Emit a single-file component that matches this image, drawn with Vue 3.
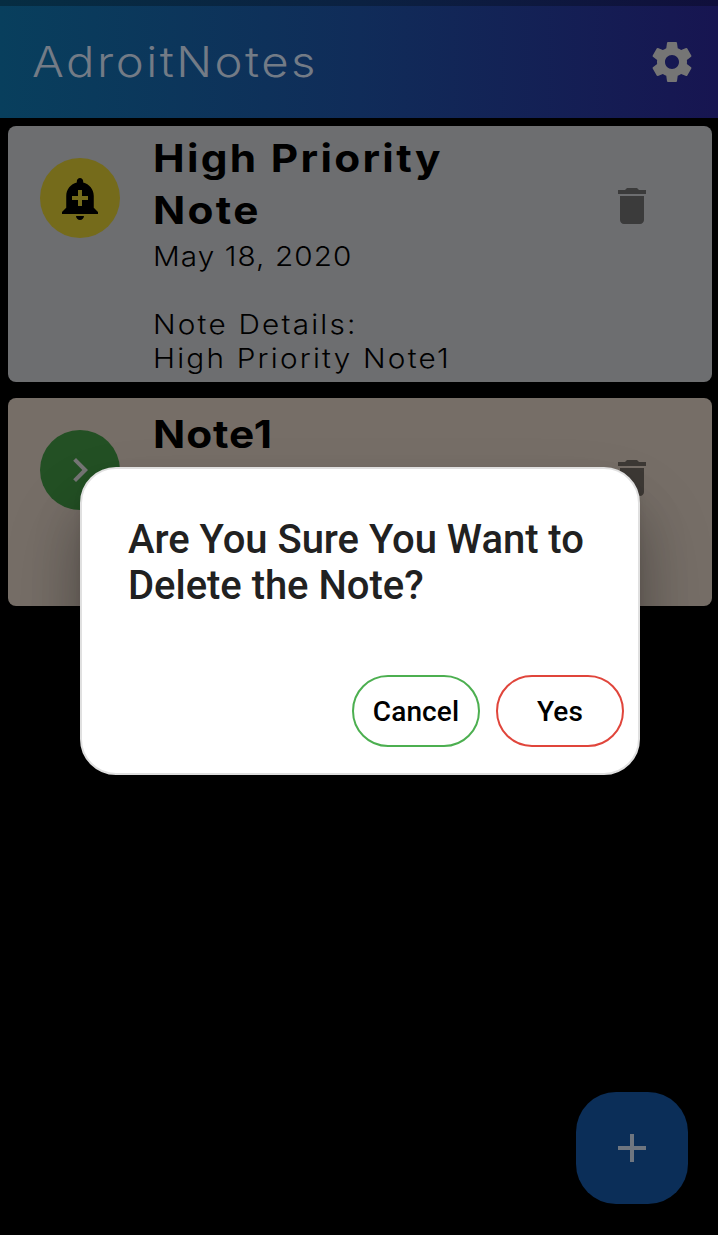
<script setup>
const notes = [
  {
    id: 1,
    title: ['High Priority', 'Note'],
    date: 'May 18, 2020',
    details: 'High Priority Note1',
    high: true,
  },
  { id: 2, title: ['Note1'], date: '', details: '', high: false },
]
</script>

<template>
  <main class="screen">
    <div class="status"></div>
    <header class="bar">
      <h1 class="brand">AdroitNotes</h1>
      <svg class="gear" viewBox="0 0 24 24">
        <path d="M19.43 12.98c.04-.32.07-.64.07-.98s-.03-.66-.07-.98l2.11-1.65c.19-.15.24-.42.12-.64l-2-3.46c-.12-.22-.39-.3-.61-.22l-2.49 1c-.52-.4-1.08-.73-1.69-.98l-.38-2.65C14.46 2.18 14.25 2 14 2h-4c-.25 0-.46.18-.49.42l-.38 2.65c-.61.25-1.17.59-1.69.98l-2.49-1c-.23-.09-.49 0-.61.22l-2 3.46c-.13.22-.07.49.12.64l2.11 1.65c-.04.32-.07.65-.07.98s.03.66.07.98l-2.11 1.65c-.19.15-.24.42-.12.64l2 3.46c.12.22.39.3.61.22l2.49-1c.52.4 1.08.73 1.69.98l.38 2.65c.03.24.24.42.49.42h4c.25 0 .46-.18.49-.42l.38-2.65c.61-.25 1.17-.59 1.69-.98l2.49 1c.23.09.49 0 .61-.22l2-3.46c.12-.22.07-.49-.12-.64l-2.11-1.65zM12 15.5c-1.93 0-3.5-1.57-3.5-3.5s1.57-3.5 3.5-3.5 3.5 1.57 3.5 3.5-1.57 3.5-3.5 3.5z" />
      </svg>
    </header>

    <section class="list">
      <article v-for="n in notes" :key="n.id" class="card" :class="n.high ? 'high' : 'low'">
        <div class="avatar">
          <svg v-if="n.high" class="glyph" viewBox="0 0 24 24">
            <path d="M10.01 21.01c0 1.1.89 1.99 1.99 1.99s1.99-.89 1.99-1.99h-3.98zm8.87-4.19V11c0-3.25-2.25-5.97-5.29-6.69v-.72C13.59 2.71 12.88 2 12 2s-1.59.71-1.59 1.59v.72C7.37 5.03 5.12 7.75 5.12 11v5.82L3 18.94V20h18v-1.06l-2.12-2.12zM16 13.01h-3v3h-2v-3H8V11h3V8h2v3h3v2.01z" />
          </svg>
          <svg v-else class="glyph" viewBox="0 0 24 24">
            <path d="M8.59 16.59 13.17 12 8.59 7.41 10 6l6 6-6 6z" />
          </svg>
        </div>
        <div class="body">
          <h2 class="title">
            <span v-for="t in n.title" :key="t" class="line">{{ t }}</span>
          </h2>
          <p v-if="n.date" class="text date">{{ n.date }}</p>
          <template v-if="n.details">
            <p class="text">Note Details:</p>
            <p class="text">{{ n.details }}</p>
          </template>
        </div>
        <svg class="trash" viewBox="0 0 24 24">
          <path d="M6 19c0 1.1.9 2 2 2h8c1.1 0 2-.9 2-2V7H6v12zM19 4h-3.5l-1-1h-5l-1 1H5v2h14V4z" />
        </svg>
      </article>
    </section>

    <button class="fab">
      <svg viewBox="0 0 24 24"><path d="M19 13h-6v6h-2v-6H5v-2h6V5h2v6h6v2z" /></svg>
    </button>

    <div class="dialog">
      <p class="question">Are You Sure You Want to<br />Delete the Note?</p>
      <div class="actions">
        <button class="btn cancel">Cancel</button>
        <button class="btn yes">Yes</button>
      </div>
    </div>
  </main>
</template>

<style>
body {
  margin: 0;
  background: #000;
}
</style>

<style scoped>
.screen {
  position: relative;
  width: 718px;
  height: 1235px;
  overflow: hidden;
  background: #000;
  font-family: Inter, 'Open Sans', sans-serif;
}
h1,
h2,
p {
  margin: 0;
}
svg {
  display: block;
}
.status {
  height: 6px;
  background: linear-gradient(90deg, #062d42, #0b2141 50%, #100f3b);
}
.bar {
  display: flex;
  align-items: center;
  justify-content: space-between;
  height: 112px;
  padding: 0 22px 0 32px;
  box-sizing: border-box;
  background: linear-gradient(90deg, #083f5d, #102c59 50%, #171551);
}
.brand {
  font-size: 42px;
  font-weight: 300;
  line-height: 56px;
  letter-spacing: 2.2px;
  color: #737b86;
  transform: scaleX(1.125);
  transform-origin: 0 0;
}
.gear {
  width: 48px;
  height: 48px;
  fill: #757575;
}
.list {
  display: flex;
  flex-direction: column;
  gap: 16px;
  padding: 8px 6px 0 8px;
}
.card {
  display: flex;
  align-items: flex-start;
  box-sizing: border-box;
  border-radius: 8px;
  padding: 6px 60px 0 32px;
}
.high {
  height: 256px;
  background: #6d6e70;
}
.low {
  height: 208px;
  background: #766e67;
}
.avatar {
  display: flex;
  align-items: center;
  justify-content: center;
  flex: none;
  width: 80px;
  height: 80px;
  margin-top: 26px;
  border-radius: 50%;
}
.high .avatar {
  background: #756b1b;
}
.low .avatar {
  background: #235024;
}
.glyph {
  width: 48px;
  height: 48px;
}
.high .glyph {
  fill: #000;
}
.low .glyph {
  fill: #757575;
}
.body {
  flex: 1;
  padding-left: 33px;
  white-space: nowrap;
}
.title {
  font-size: 38.5px;
  font-weight: 700;
  line-height: 52px;
  letter-spacing: 2.1px;
  color: #000;
}
.low .title {
  margin-top: 4px;
  letter-spacing: 0.8px;
}
.line {
  display: block;
  transform: scaleX(1.1);
  transform-origin: 0 0;
}
.text {
  font-size: 27.5px;
  font-weight: 300;
  line-height: 34px;
  letter-spacing: 2.05px;
  color: #000;
  transform: scaleX(1.08);
  transform-origin: 0 0;
}
.date {
  margin-top: 3px;
  margin-bottom: 34px;
  letter-spacing: 1px;
}
.trash {
  flex: none;
  width: 48px;
  height: 48px;
  margin-top: 50px;
  margin-right: -4px;
  fill: #3b3b3b;
}
.low .trash {
  fill: #3d3935;
}
.fab {
  position: absolute;
  right: 30px;
  bottom: 31px;
  display: flex;
  align-items: center;
  justify-content: center;
  width: 112px;
  height: 112px;
  padding: 0;
  border: 0;
  border-radius: 40px;
  background: #0b2e58;
}
.fab svg {
  width: 48px;
  height: 48px;
  fill: #6f7680;
}
.dialog {
  position: absolute;
  left: 80px;
  top: 467px;
  display: flex;
  flex-direction: column;
  justify-content: space-between;
  width: 560px;
  height: 308px;
  padding: 48px 14px 26px 46px;
  box-sizing: border-box;
  border: 2px solid #e0e0e0;
  border-radius: 36px;
  background: #fff;
  box-shadow:
    0 48px 76px 6px rgba(0, 0, 0, 0.16),
    0 40px 50px 0 rgba(0, 0, 0, 0.2),
    0 4px 8px 0 rgba(0, 0, 0, 0.06);
  font-family: Roboto, sans-serif;
}
.question {
  font-size: 40px;
  font-weight: 500;
  line-height: 46px;
  letter-spacing: -0.03px;
  color: #212121;
  white-space: nowrap;
}
.actions {
  display: flex;
  justify-content: flex-end;
  gap: 16px;
}
.btn {
  width: 128px;
  height: 72px;
  padding: 2px 0 0;
  box-sizing: border-box;
  border: 2px solid;
  border-radius: 36px;
  background: #fff;
  font: 500 28px/32px Roboto, sans-serif;
  letter-spacing: 0.1px;
  color: #000;
}
.cancel {
  border-color: #4caf50;
}
.yes {
  border-color: #e0453b;
}
</style>
